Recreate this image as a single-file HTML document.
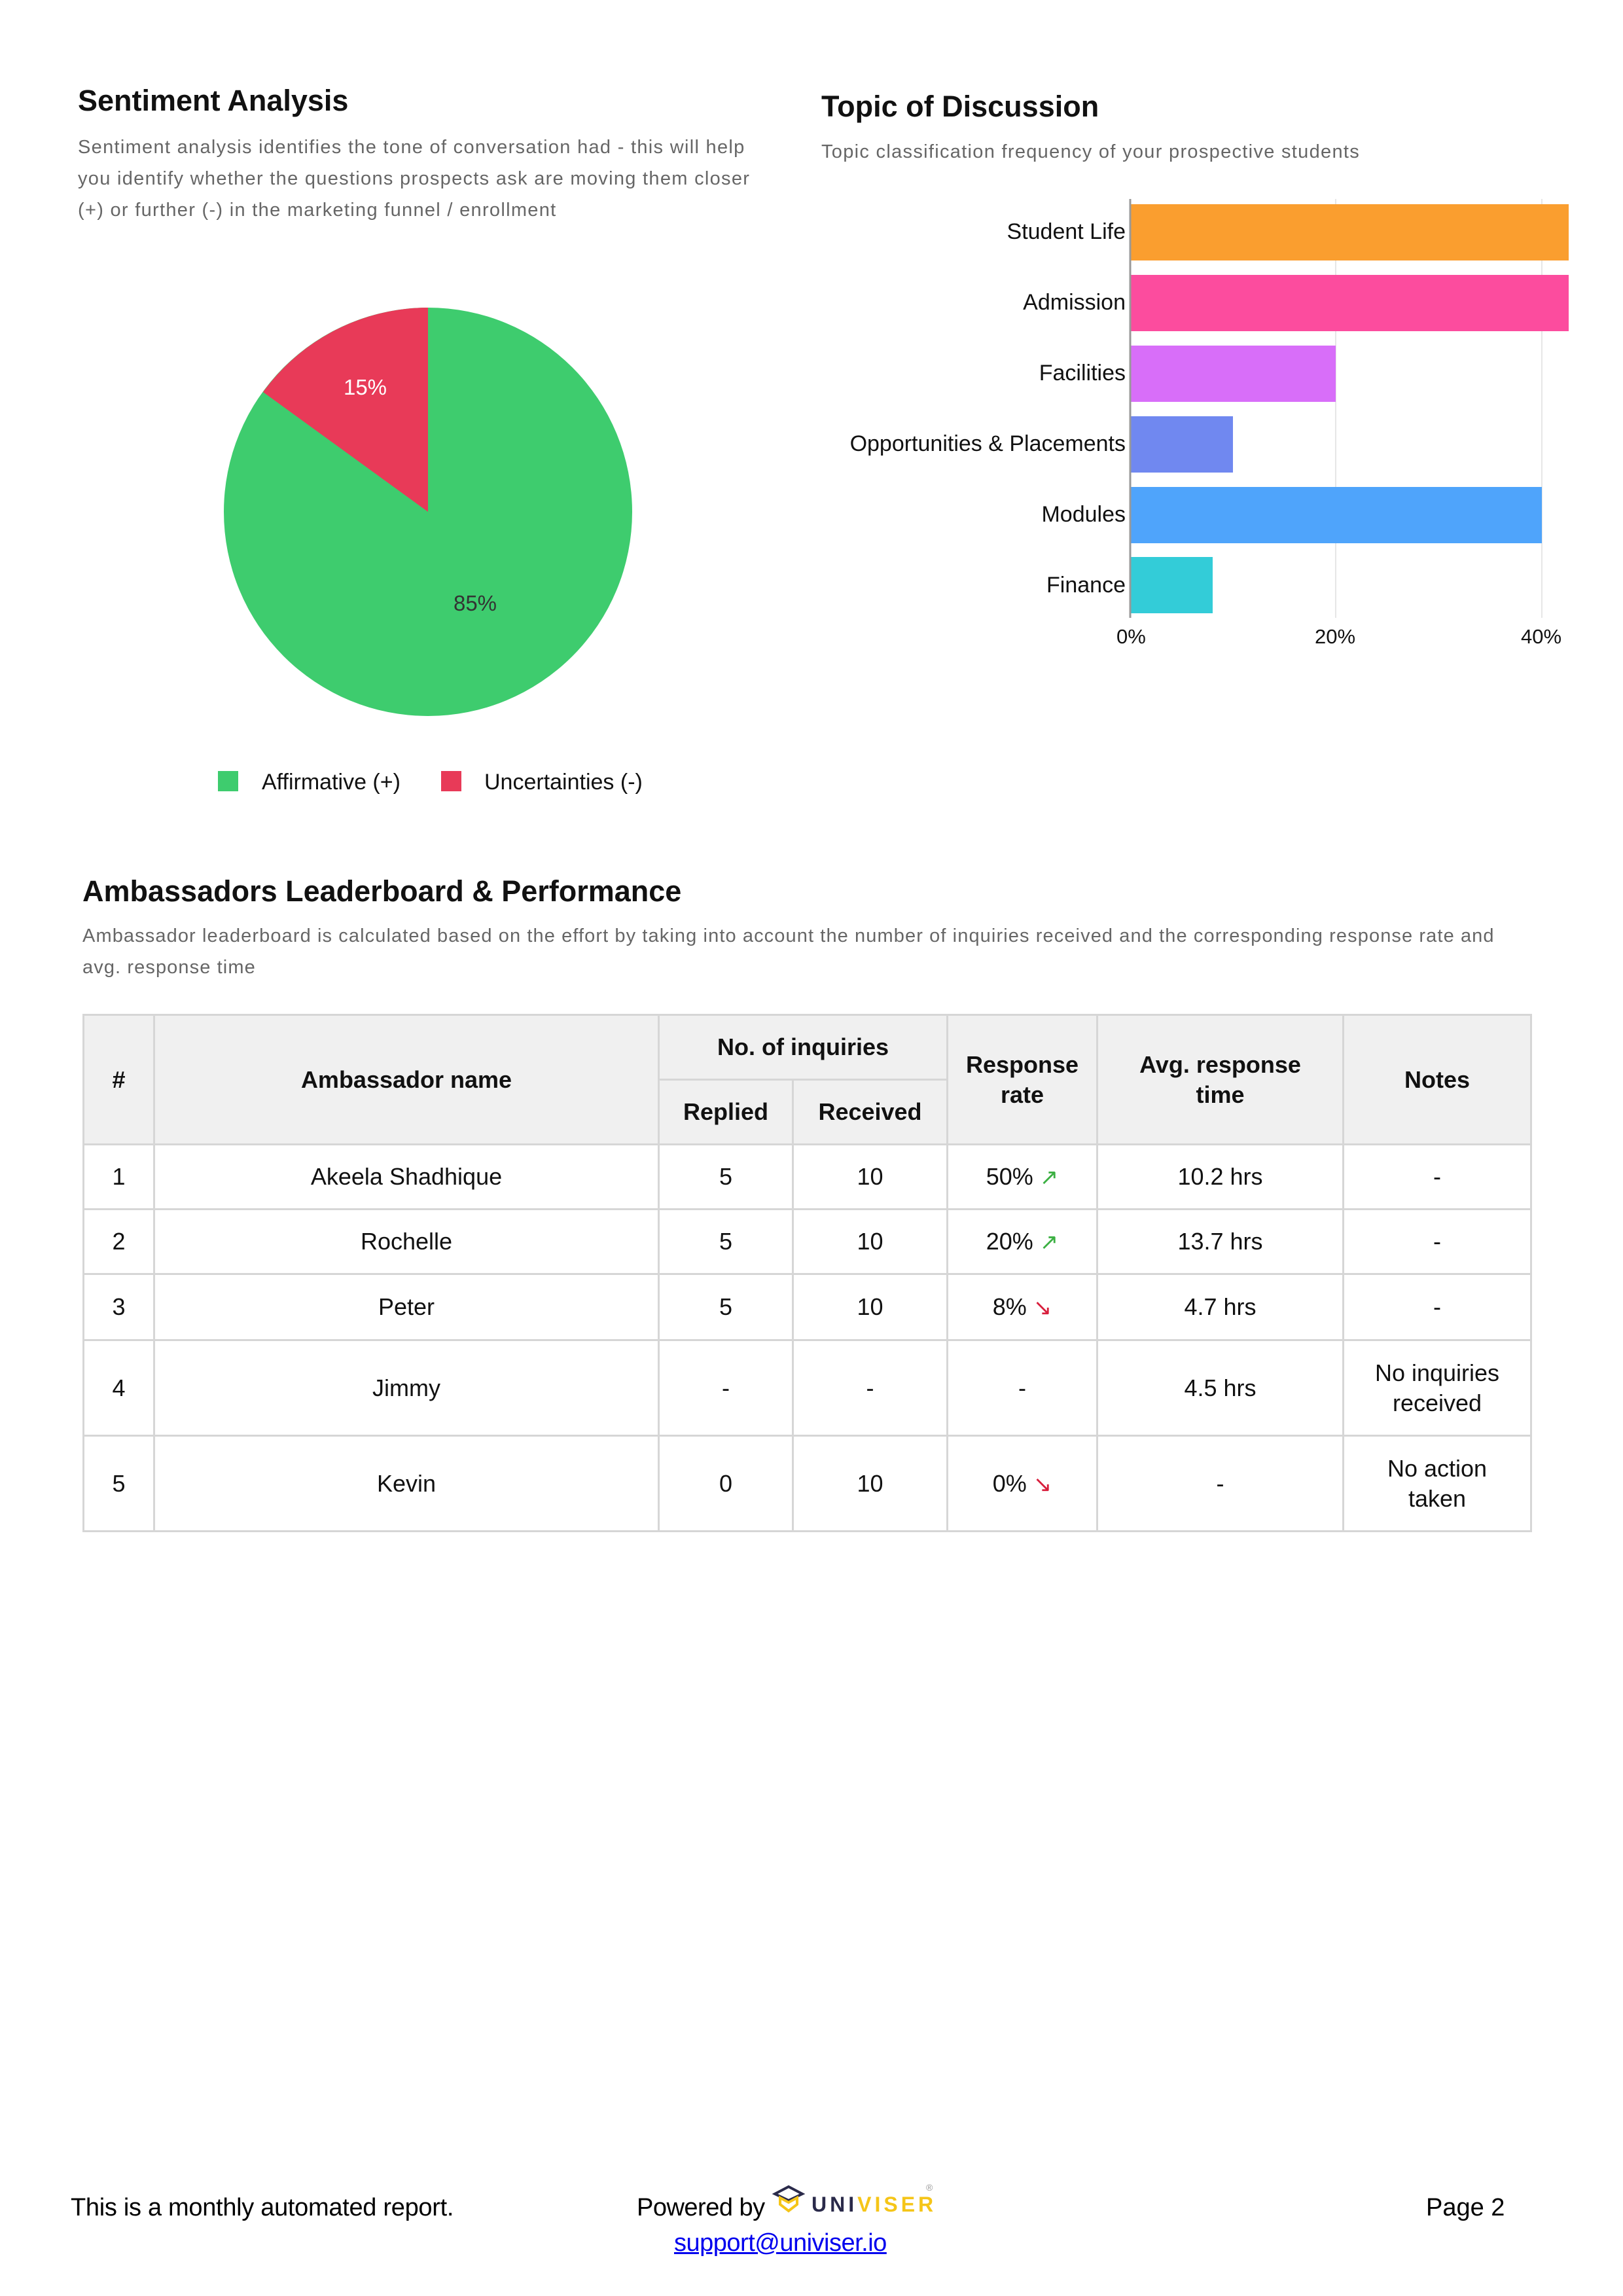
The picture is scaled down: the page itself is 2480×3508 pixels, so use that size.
<!DOCTYPE html>
<html><head><meta charset="utf-8"><style>
body{margin:0;width:2480px;height:3508px;background:#fff;position:relative;font-family:"Liberation Sans",sans-serif;overflow:hidden}
.a{position:absolute;white-space:nowrap}
.h{font-weight:bold;font-size:45px;color:#111}
.d{font-size:29px;color:#666;line-height:48px;letter-spacing:1.3px}
table{position:absolute;left:126px;top:1549px;width:2212px;border-collapse:collapse;table-layout:fixed;font-size:36px;color:#111}
td,th{border:3px solid #d6d6d6;text-align:center;padding:0}
th{background:#f0f0f0;font-weight:bold;line-height:46px}
.bl{position:absolute;font-size:34px;color:#111;text-align:right;width:700px;left:1020px}
.tk{position:absolute;font-size:31px;color:#111;top:955px}
.up{color:#3cb043;font-size:34px}
.dn{color:#d81e3c;font-size:34px}
</style></head><body>
<div class="a h" style="left:119px;top:128px">Sentiment Analysis</div>
<div class="a d" style="left:119px;top:201px">Sentiment analysis identifies the tone of conversation had - this will help<br>you identify whether the questions prospects ask are moving them closer<br>(+) or further (-) in the marketing funnel / enrollment</div>
<svg class="a" style="left:0;top:0" width="1240" height="1300">
<circle cx="654" cy="782" r="312" fill="#3ecc6e"/>
<path d="M654 782 L654 470 A312 312 0 0 0 402 599 Z" fill="#e83a58"/>
<text x="558" y="603" font-family="Liberation Sans" font-size="33" fill="#fff" text-anchor="middle">15%</text>
<text x="726" y="933" font-family="Liberation Sans" font-size="33" fill="#333" text-anchor="middle">85%</text>
<rect x="333" y="1178" width="31" height="31" fill="#3ecc6e"/>
<rect x="674" y="1178" width="31" height="31" fill="#e83a58"/>
<text x="400" y="1206" font-family="Liberation Sans" font-size="34" fill="#111">Affirmative (+)</text>
<text x="740" y="1206" font-family="Liberation Sans" font-size="34" fill="#111">Uncertainties (-)</text>
</svg>
<div class="a h" style="left:1255px;top:137px">Topic of Discussion</div>
<div class="a d" style="left:1255px;top:208px">Topic classification frequency of your prospective students</div>
<svg class="a" style="left:0;top:0" width="2480" height="1000">
<line x1="2041" y1="304" x2="2041" y2="944" stroke="#e6e6e6" stroke-width="2"/>
<line x1="2356" y1="304" x2="2356" y2="944" stroke="#e6e6e6" stroke-width="2"/>
<rect x="1727" y="312" width="670" height="86" fill="#fa9e2f"/>
<rect x="1727" y="420" width="670" height="86" fill="#fc4c9e"/>
<rect x="1727" y="528" width="314" height="86" fill="#d86ef9"/>
<rect x="1727" y="636" width="157" height="86" fill="#7088f0"/>
<rect x="1727" y="744" width="629" height="86" fill="#4fa4fb"/>
<rect x="1727" y="851" width="126" height="86" fill="#33ccd8"/>
<line x1="1727" y1="304" x2="1727" y2="944" stroke="#999" stroke-width="3"/>
</svg>
<div class="bl" style="top:335px">Student Life</div>
<div class="bl" style="top:443px">Admission</div>
<div class="bl" style="top:551px">Facilities</div>
<div class="bl" style="top:659px">Opportunities &amp; Placements</div>
<div class="bl" style="top:767px">Modules</div>
<div class="bl" style="top:875px">Finance</div>
<div class="tk" style="left:1706px">0%</div>
<div class="tk" style="left:2009px">20%</div>
<div class="tk" style="left:2324px">40%</div>
<div class="a h" style="left:126px;top:1336px">Ambassadors Leaderboard &amp; Performance</div>
<div class="a d" style="left:126px;top:1406px;letter-spacing:1.1px">Ambassador leaderboard is calculated based on the effort by taking into account the number of inquiries received and the corresponding response rate and<br>avg. response time</div>
<table>
<colgroup><col style="width:108px"><col style="width:771px"><col style="width:205px"><col style="width:236px"><col style="width:229px"><col style="width:376px"><col style="width:287px"></colgroup>
<tr style="height:99px"><th rowspan="2">#</th><th rowspan="2">Ambassador name</th><th colspan="2">No. of inquiries</th><th rowspan="2">Response<br>rate</th><th rowspan="2">Avg. response<br>time</th><th rowspan="2">Notes</th></tr>
<tr style="height:99px"><th>Replied</th><th>Received</th></tr>
<tr style="height:99px"><td>1</td><td>Akeela Shadhique</td><td>5</td><td>10</td><td>50% <span class="up">↗</span></td><td>10.2 hrs</td><td>-</td></tr>
<tr style="height:99px"><td>2</td><td>Rochelle</td><td>5</td><td>10</td><td>20% <span class="up">↗</span></td><td>13.7 hrs</td><td>-</td></tr>
<tr style="height:101px"><td>3</td><td>Peter</td><td>5</td><td>10</td><td>8% <span class="dn">↘</span></td><td>4.7 hrs</td><td>-</td></tr>
<tr style="height:146px"><td>4</td><td>Jimmy</td><td>-</td><td>-</td><td>-</td><td>4.5 hrs</td><td style="line-height:46px">No inquiries<br>received</td></tr>
<tr style="height:146px"><td>5</td><td>Kevin</td><td>0</td><td>10</td><td>0% <span class="dn">↘</span></td><td>-</td><td style="line-height:46px">No action<br>taken</td></tr>
</table>
<div class="a" style="left:108px;top:3352px;font-size:38px;letter-spacing:-0.3px;color:#000">This is a monthly automated report.</div>
<div class="a" style="left:973px;top:3352px;font-size:38px;letter-spacing:-0.5px;color:#000">Powered by</div>
<svg class="a" style="left:1180px;top:3338px" width="50" height="44" viewBox="0 0 50 44">
<path d="M4 14 L25 3 L46 14 L25 24 Z" fill="none" stroke="#2a2a4a" stroke-width="4"/>
<path d="M12 20 L12 30 L25 40 L38 30 L38 20 L25 27 Z" fill="none" stroke="#f5c518" stroke-width="4"/>
</svg>
<div class="a" style="left:1240px;top:3350px;font-size:32px;letter-spacing:5px;font-weight:bold"><span style="color:#2a2a4a">UNI</span><span style="color:#f5c518">VISER</span></div>
<div class="a" style="left:1415px;top:3334px;font-size:14px;color:#999">®</div>
<div class="a" style="left:2179px;top:3352px;font-size:38px;color:#000">Page 2</div>
<div class="a" style="left:1030px;top:3406px;font-size:38px;letter-spacing:-0.5px;color:#0000ee;text-decoration:underline">support@univiser.io</div>
</body></html>
